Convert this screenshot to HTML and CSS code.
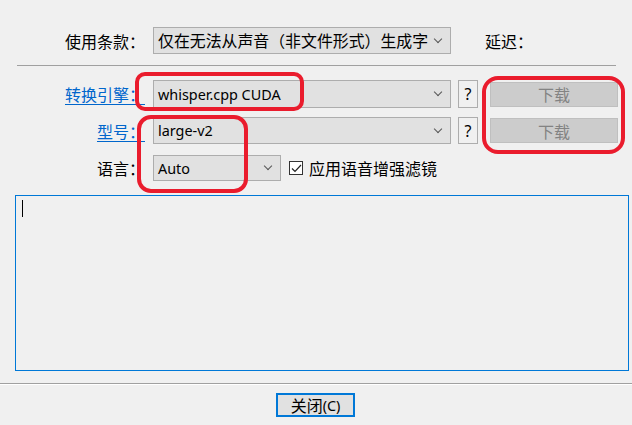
FILE: index.html
```html
<!DOCTYPE html>
<html lang="zh">
<head>
<meta charset="utf-8">
<link rel="stylesheet" href="styles.css">
</head>
<body>
<div class="dlg">
  <div class="row r1">
    <span class="lbl">使用条款：</span>
    <div class="combo c-terms"><span class="ct cjk">仅在无法从声音（非文件形式）生成字</span><span class="arr"></span></div>
    <span class="delay">延迟：</span>
  </div>
  <div class="sep"></div>
  <div class="row r2">
    <a class="lbl link">转换引擎：</a>
    <div class="combo c-wide"><span class="ct lat">whisper.cpp CUDA</span><span class="arr"></span></div>
    <div class="q">?</div>
    <div class="dl">下载</div>
  </div>
  <div class="row r3">
    <a class="lbl link">型号：</a>
    <div class="combo c-wide"><span class="ct lat">large-v2</span><span class="arr"></span></div>
    <div class="q">?</div>
    <div class="dl">下载</div>
  </div>
  <div class="row r4">
    <span class="lbl">语言：</span>
    <div class="combo c-lang"><span class="ct lat">Auto</span><span class="arr"></span></div>
    <label class="chk"><span class="box"><svg width="11" height="9" viewBox="0 0 11 9"><path d="M1 4.5 L4 7.5 L10 1" fill="none" stroke="#222" stroke-width="1.2"/></svg></span>应用语音增强滤镜</label>
  </div>
  <div class="text"><span class="caret"></span></div>
  <div class="bsep"></div>
  <div class="foot"><div class="close">关闭<span class="lat">(C)</span></div></div>

  <div class="mark m1"></div>
  <div class="mark m2"></div>
  <div class="mark m3"></div>
</div>
</body>
</html>
```
FILE: styles.css
```css
html, body { margin: 0; padding: 0; }
body {
  background: #f0f0f0;
  font-family: "Noto Sans", "Noto Sans CJK SC", sans-serif;
  font-size: 16px;
  color: #000;
}
.dlg { position: relative; width: 632px; height: 425px; overflow: hidden; }
.lat { font-size: 14.4px; }
.cjk { font-size: 15.9px; }
.row { display: flex; align-items: center; }
.lbl { width: 145px; text-align: right; margin-right: 8px; white-space: nowrap; flex: none; }
.link { color: #0066cc; text-decoration: underline; text-underline-offset: 3px; }
.r1 { padding-top: 27px; height: 27px; }
.r2 { margin-top: 14px; height: 28px; }
.r3 { margin-top: 9px; height: 27px; }
.r4 { margin-top: 11px; height: 26px; }
.combo {
  box-sizing: border-box; height: 100%;
  background: #e1e1e1; border: 1px solid #adadad;
  display: flex; align-items: center; padding-left: 4px; flex: none;
  position: relative;
}
.ct { white-space: nowrap; }
.c-terms { width: 298px; }
.c-wide { width: 298px; }
.c-lang { width: 128px; }
.arr {
  position: absolute; right: 9px; top: 50%;
  width: 5px; height: 5px; margin-top: -5px;
  border-right: 1px solid #555; border-bottom: 1px solid #555;
  transform: rotate(45deg);
}
.delay { margin-left: 34px; }
.sep { margin: 11px 0 0 17px; width: 599px; height: 1px; background: #a0a0a0; }
.q {
  box-sizing: border-box; width: 20px; height: 100%; margin-left: 7px;
  border: 1px solid #adadad; background: #f0f0f0;
  display: flex; align-items: center; justify-content: center; font-size: 16px;
}
.dl {
  box-sizing: border-box; width: 128px; height: 25px; margin-left: 12px;
  background: #cccccc; border: 1px solid #bfbfbf; color: #838383;
  display: flex; align-items: center; justify-content: center;
}
.chk { display: flex; align-items: center; margin-left: 8px; white-space: nowrap; }
.box {
  box-sizing: border-box; width: 14px; height: 14px; border: 1px solid #333; background: #fff;
  margin-right: 6px; display: flex; align-items: center; justify-content: center;
}
.text {
  box-sizing: border-box; margin: 14px 3px 0 15px; height: 176px;
  border: 1px solid #0078d7; padding: 4px 0 0 6px;
}
.caret { display: block; width: 1px; height: 17px; background: #000; }
.bsep { margin-top: 12px; height: 1px; background: #a0a0a0; border-bottom: 1px solid #fff; }
.foot { display: flex; justify-content: center; padding-top: 8px; }
.close {
  box-sizing: border-box; width: 79px; height: 24px; margin-left: -1px;
  border: 2px solid #0078d7; background: #e1e1e1;
  display: flex; align-items: center; justify-content: center;
}
.mark { position: absolute; border: 4px solid #ea1c2d; box-sizing: border-box; }
.m1 { left: 135px; top: 72px; width: 169px; height: 39px; border-radius: 10px; }
.m2 { left: 482px; top: 76px; width: 143px; height: 78px; border-radius: 16px; }
.m3 { left: 137px; top: 115px; width: 111px; height: 78px; border-radius: 14px; }
```
